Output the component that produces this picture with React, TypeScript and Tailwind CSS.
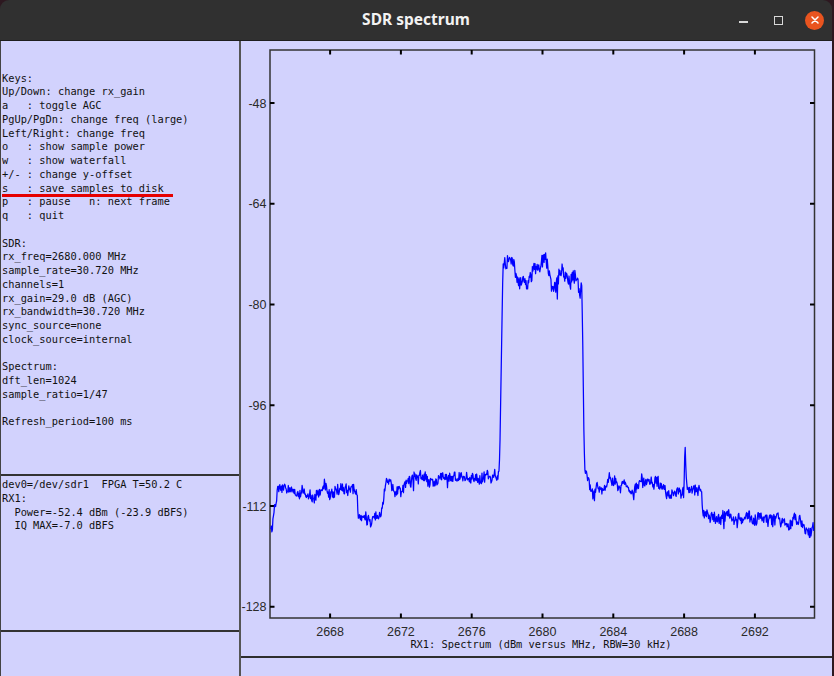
import { useMemo } from "react"

const mono = "font-['DejaVu_Sans_Mono','Liberation_Mono',monospace]"

const infoLines = [
  "",
  "",
  "Keys:",
  "Up/Down: change rx_gain",
  "a   : toggle AGC",
  "PgUp/PgDn: change freq (large)",
  "Left/Right: change freq",
  "o   : show sample power",
  "w   : show waterfall",
  "+/- : change y-offset",
  "s   : save samples to disk",
  "p   : pause   n: next frame",
  "q   : quit",
  "",
  "SDR:",
  "rx_freq=2680.000 MHz",
  "sample_rate=30.720 MHz",
  "channels=1",
  "rx_gain=29.0 dB (AGC)",
  "rx_bandwidth=30.720 MHz",
  "sync_source=none",
  "clock_source=internal",
  "",
  "Spectrum:",
  "dft_len=1024",
  "sample_ratio=1/47",
  "",
  "Refresh_period=100 ms",
]

const statusLines = [
  "dev0=/dev/sdr1  FPGA T=50.2 C",
  "RX1:",
  "  Power=-52.4 dBm (-23.9 dBFS)",
  "  IQ MAX=-7.0 dBFS",
]

// plot geometry, in page pixels
const PLOT = { left: 270, top: 49, right: 814.5, bottom: 617 }
const yOf = (dbm: number) => 102 + (-48 - dbm) * 6.297
const xOf = (mhz: number) => 542.5 + (mhz - 2680) * 17.7

const yTicks = [-48, -64, -80, -96, -112, -128]
const xTicks = [2668, 2672, 2676, 2680, 2684, 2688, 2692]

// rough outline of the trace read off the screen (x, y in px)
const outline: [number, number][] = [
  [270, 532], [272, 522], [274, 508], [277, 495], [280, 486], [290, 489],
  [300, 493], [315, 495], [325, 490], [340, 487], [350, 488], [355, 489],
  [357, 500], [359, 515], [370, 518], [380, 516], [383, 505], [385, 485],
  [388, 481], [395, 492], [402, 490], [408, 480], [412, 475], [430, 479],
  [450, 478], [470, 477], [490, 476], [499, 477], [500, 440], [502, 320],
  [503, 263], [506, 262], [510, 261], [513, 258], [517, 276], [522, 282],
  [528, 283], [534, 270], [540, 265], [545, 259], [549, 276], [553, 283],
  [558, 278], [562, 263], [566, 275], [570, 284], [574, 276], [577, 273],
  [580, 283], [582, 287], [583, 360], [584, 440], [585, 472], [588, 474],
  [592, 488], [600, 490], [607, 484], [613, 477], [618, 485], [630, 487],
  [640, 483], [655, 481], [663, 484], [668, 495], [672, 488], [684, 488],
  [685, 440], [686, 472], [687, 487], [695, 491], [701, 492], [703, 514],
  [720, 515], [757, 516], [780, 519], [800, 521], [804, 528], [808, 536],
  [811, 532], [814, 522],
]

function baseY(x: number) {
  for (let i = 1; i < outline.length; i++) {
    const [xa, ya] = outline[i - 1]
    const [xb, yb] = outline[i]
    if (x <= xb) return ya + ((x - xa) / (xb - xa)) * (yb - ya)
  }
  return outline[outline.length - 1][1]
}

function buildTrace() {
  let seed = 918273
  const rand = () => {
    seed = (seed + 0x6d2b79f5) | 0
    let t = Math.imul(seed ^ (seed >>> 15), 1 | seed)
    t = (t + Math.imul(t ^ (t >>> 7), 61 | t)) ^ t
    return ((t ^ (t >>> 14)) >>> 0) / 4294967296
  }

  const n = 1024
  const x0 = 270.8
  const x1 = 813.6
  let slow = 0
  const points: string[] = []
  for (let i = 0; i < n; i++) {
    const x = x0 + ((x1 - x0) * i) / (n - 1)
    const edge = (x > 499 && x < 503.5) || (x > 582.5 && x < 585.5) || (x > 684 && x < 686.5)
    const amp = x > 503 && x < 582 ? 1.3 : 1
    slow = slow * 0.78 + (rand() - 0.5) * 5
    let y = baseY(x)
    if (!edge) {
      y += amp * (slow + (rand() - 0.5) * 10)
      if (rand() < 0.06) y += (rand() - 0.4) * 14 * amp
    }
    points.push(`${x.toFixed(2)},${y.toFixed(1)}`)
  }
  return points.join(" ")
}

function SpectrumPlot() {
  const trace = useMemo(buildTrace, [])

  return (
    <svg width={591} height={618} viewBox="241 40 591 618" className="block">
      <rect
        x={PLOT.left}
        y={PLOT.top}
        width={PLOT.right - PLOT.left}
        height={PLOT.bottom - PLOT.top}
        fill="none"
        stroke="#333"
        strokeWidth={1.5}
      />

      {yTicks.map((v) => (
        <g key={v}>
          <line x1={PLOT.left} x2={PLOT.left + 4.5} y1={yOf(v)} y2={yOf(v)} stroke="#000" strokeWidth={2} />
          <line x1={PLOT.right - 4.5} x2={PLOT.right} y1={yOf(v)} y2={yOf(v)} stroke="#000" strokeWidth={2} />
          <text
            x={266.5}
            y={yOf(v) + 4.5}
            textAnchor="end"
            fontFamily="'Liberation Sans', Arial, sans-serif"
            fontSize={12.5}
            fill="#2a2a2a"
          >
            {v}
          </text>
        </g>
      ))}

      {xTicks.map((f) => (
        <g key={f}>
          <line x1={xOf(f)} x2={xOf(f)} y1={PLOT.top} y2={PLOT.top + 4.5} stroke="#000" strokeWidth={2} />
          <line x1={xOf(f)} x2={xOf(f)} y1={PLOT.bottom - 4.5} y2={PLOT.bottom} stroke="#000" strokeWidth={2} />
          <text
            x={xOf(f)}
            y={634.5}
            textAnchor="middle"
            fontFamily="'Liberation Sans', Arial, sans-serif"
            fontSize={12.5}
            fill="#2a2a2a"
          >
            {f}
          </text>
        </g>
      ))}

      <polyline points={trace} fill="none" stroke="#0000ff" strokeWidth={1.25} strokeLinejoin="round" />

      <text
        x={541}
        y={647}
        textAnchor="middle"
        fontFamily="'DejaVu Sans Mono', 'Liberation Mono', monospace"
        fontSize={10.33}
        fill="#111"
        xmlSpace="preserve"
      >
        RX1: Spectrum (dBm versus MHz, RBW=30 kHz)
      </text>
    </svg>
  )
}

function TitleBar() {
  return (
    <div className="grid h-[40px] grid-cols-[1fr_auto_1fr] items-center rounded-t-[9px] bg-[#303030]">
      <div />
      <h1 className="font-['Noto_Sans','Open_Sans',sans-serif] text-[15.5px] font-bold text-[#f2f2f2]">
        SDR spectrum
      </h1>
      <div className="flex items-center justify-end">
        <span className="mt-[3px] h-[2px] w-[9px] bg-[#d8d8d8]" />
        <span className="ml-[26px] h-[9px] w-[9px] border-[1.5px] border-[#d8d8d8]" />
        <span className="ml-[22px] mr-[8px] flex h-[19px] w-[19px] items-center justify-center rounded-full bg-[#e9541f]">
          <svg width="8" height="8" viewBox="0 0 8 8">
            <path d="M1 1 L7 7 M7 1 L1 7" stroke="#fff" strokeWidth="1.5" strokeLinecap="round" />
          </svg>
        </span>
      </div>
    </div>
  )
}

export default function App() {
  return (
    <div className="h-[676px] w-[834px] overflow-hidden bg-[#2d1820]">
      <div className="flex h-full w-[832px] flex-col">
        <TitleBar />

        <div className="flex flex-1 border-t border-[#1e1e1e] bg-[#d2d2fd]">
          <aside className={`relative flex w-[239px] flex-col border-l border-[#444] ${mono} text-[10.33px] leading-[13.75px] text-[#111]`}>
            <div className="h-[433px] whitespace-pre pl-[1px] pt-[3px]">
              {infoLines.map((line, i) => (
                <div key={i} className="h-[13.75px]">
                  {line}
                </div>
              ))}
            </div>
            <div className="h-[158px] whitespace-pre border-y-2 border-[#333] pl-[1px] pt-[2px]">
              {statusLines.map((line) => (
                <div key={line}>{line}</div>
              ))}
            </div>
            <div className="flex-1" />

            {/* red marker under the "save samples" line */}
            <span className="absolute left-[1px] top-[153px] h-[3px] w-[171px] bg-[#e60000]" />
          </aside>

          <div className="w-[2px] bg-[#555]" />

          <section className="flex flex-1 flex-col">
            <div className="h-[617px] border-b-2 border-[#2e2e2e]">
              <SpectrumPlot />
            </div>
            <div className="flex-1" />
          </section>
        </div>
      </div>
    </div>
  )
}
